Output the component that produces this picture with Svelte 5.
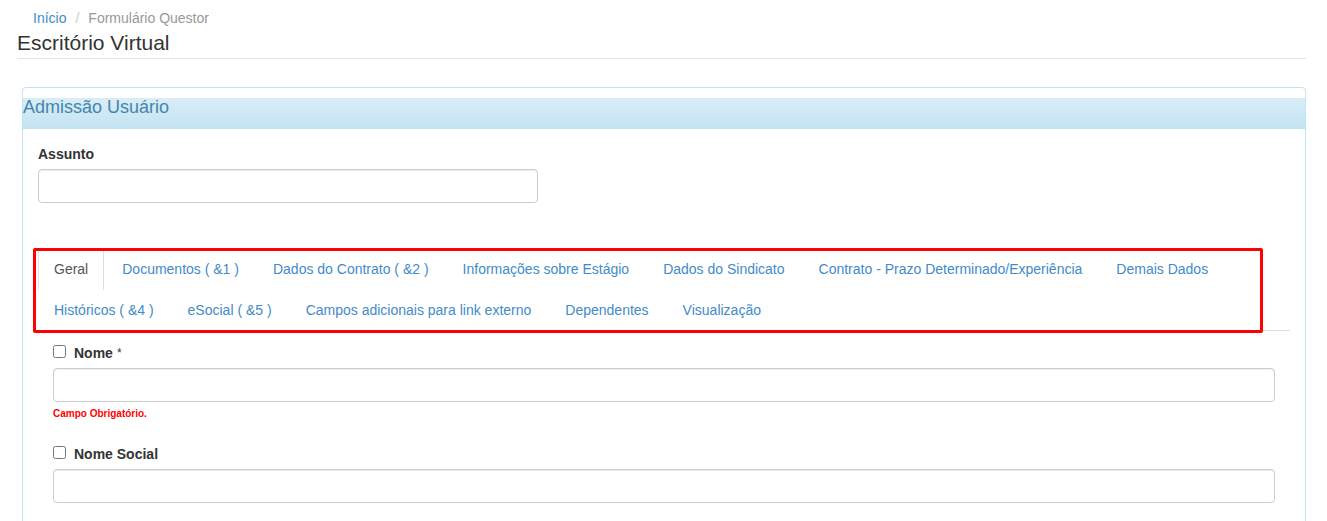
<script>
  const tabs = [
    'Geral',
    'Documentos ( &1 )',
    'Dados do Contrato ( &2 )',
    'Informações sobre Estágio',
    'Dados do Sindicato',
    'Contrato - Prazo Determinado/Experiência',
    'Demais Dados',
    'Históricos ( &4 )',
    'eSocial ( &5 )',
    'Campos adicionais para link externo',
    'Dependentes',
    'Visualização'
  ];
  let active = $state(0);
  let subject = $state('');

  const fields = $state([
    { id: 'nome', label: 'Nome', required: true, checked: false, value: '' },
    { id: 'nome-social', label: 'Nome Social', required: false, checked: false, value: '' }
  ]);

  function selectTab(event, index) {
    event.preventDefault();
    active = index;
  }
</script>

<main class="page">
  <header class="page-header">
    <ol class="breadcrumb">
      <li><a href="#inicio">Início</a></li>
      <li class="current">Formulário Questor</li>
    </ol>
    <h1>Escritório Virtual</h1>
  </header>

  <section class="panel">
    <h2 class="panel-title">Admissão Usuário</h2>
    <form class="panel-body">
      <div class="subject">
        <label for="assunto">Assunto</label>
        <input id="assunto" class="control" type="text" bind:value={subject} />
      </div>

      <nav class="tab-area">
        <ul class="tabs">
          {#each tabs as tab, i}
            <li>
              <a href="#aba-{i}" class:active={active === i} onclick={(e) => selectTab(e, i)}>{tab}</a>
            </li>
          {/each}
        </ul>
      </nav>

      <div class="fields">
        {#each fields as field}
          <div class="field">
            <div class="field-label">
              <input type="checkbox" aria-label="Selecionar {field.label}" bind:checked={field.checked} />
              <label for={field.id}>{field.label}</label>
              {#if field.required}<span class="star">*</span>{/if}
            </div>
            <input id={field.id} class="control" type="text" bind:value={field.value} />
            {#if field.required}<p class="error">Campo Obrigatório.</p>{/if}
          </div>
        {/each}
      </div>
    </form>
  </section>
</main>

<style>
  :global(html) {
    scrollbar-width: none;
  }

  :global(body) {
    background: #fff;
  }

  .page,
  .page * {
    box-sizing: border-box;
  }

  .page {
    padding: 8px 21px 0 17px;
    font: 14px/20px "Liberation Sans", Arial, sans-serif;
    color: #333;
  }

  a {
    color: #428bca;
    text-decoration: none;
  }

  .page-header {
    border-bottom: 1px solid #e5e5e5;
    padding-bottom: 4px;
  }

  .breadcrumb {
    display: flex;
    list-style: none;
    margin: 0;
    padding: 0 16px;
  }

  .current {
    color: #999;
  }

  .current::before {
    content: "/";
    padding: 0 9px;
    color: #ccc;
  }

  h1 {
    margin: 3px 0 0;
    font-size: 21px;
    line-height: 23px;
    font-weight: 400;
  }

  .panel {
    margin: 28px 0 0 5px;
    padding-top: 10px;
    border: 1px solid #bce8f1;
    border-radius: 4px;
  }

  .panel-title {
    margin: 0;
    height: 31px;
    font-size: 18px;
    line-height: 18px;
    font-weight: 400;
    color: #4585ad;
    background: linear-gradient(#d9edf7, #c4e3f3);
    border-bottom: 1px solid #bce8f1;
  }

  .panel-body {
    padding: 15px;
  }

  label {
    font-weight: 700;
  }

  .subject label {
    display: block;
    margin-bottom: 5px;
  }

  .subject .control {
    max-width: 500px;
  }

  .control {
    display: block;
    width: 100%;
    height: 34px;
    padding: 6px 12px;
    font: inherit;
    color: #555;
    background: #fff;
    border: 1px solid #ccc;
    border-radius: 4px;
    box-shadow: inset 0 1px 1px rgba(0, 0, 0, 0.075);
  }

  .tab-area {
    position: relative;
    margin-top: 45px;
  }

  /* Highlight frame drawn over the tab list */
  .tab-area::after {
    content: "";
    position: absolute;
    inset: 0 27px -2px -5px;
    border: 3px solid #f00;
    border-radius: 2px;
    pointer-events: none;
  }

  .tabs {
    display: flex;
    flex-wrap: wrap;
    list-style: none;
    margin: 0;
    padding: 0;
    border-bottom: 1px solid #ddd;
  }

  .tabs li {
    margin-bottom: -1px;
  }

  .tabs a {
    display: block;
    margin-right: 2px;
    padding: 10px 15px;
    border: 1px solid transparent;
    border-radius: 4px 4px 0 0;
  }

  .tabs a.active {
    color: #555;
    background: #fff;
    border-color: #ddd;
    border-bottom-color: transparent;
  }

  .fields {
    display: grid;
    gap: 23px;
    padding: 12px 15px 23px;
  }

  .field-label {
    display: flex;
    margin-bottom: 5px;
  }

  .field-label input {
    width: 13px;
    height: 13px;
    margin: 2px 8px 0 0;
  }

  .star {
    margin-left: 4px;
    font-size: 12px;
  }

  .error {
    margin: 5px 0 0;
    font-size: 10px;
    line-height: 14px;
    font-weight: 700;
    color: #f00;
  }
</style>
